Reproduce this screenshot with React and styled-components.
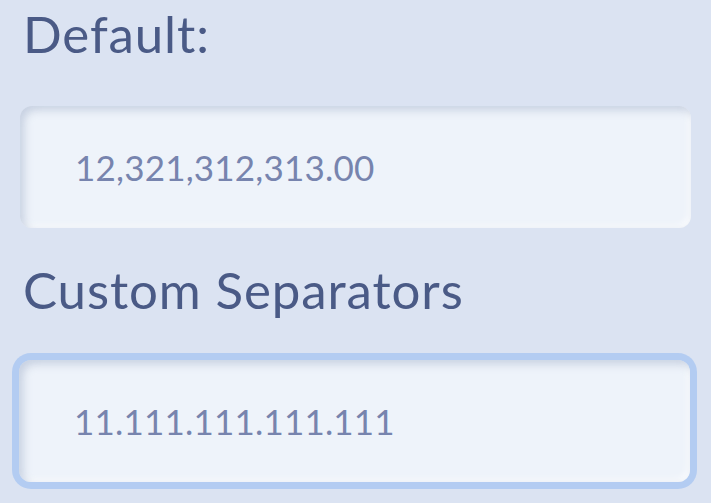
import React from 'react';
import styled, { createGlobalStyle } from 'styled-components';

const GlobalStyle = createGlobalStyle`
  html, body {
    margin: 0;
    padding: 0;
    background: #dbe3f2;
  }
  body {
    font-family: 'Lato', 'Noto Sans', sans-serif;
  }
`;

const Page = styled.div`
  display: flex;
  flex-direction: column;
  padding: 0 21px 0 20px;
  width: 711px;
  height: 503px;
  box-sizing: border-box;
  overflow: hidden;
`;

const Label = styled.h2`
  margin: ${p => p.$top}px 0 0 3px;
  font-size: 51px;
  font-weight: 400;
  line-height: 1;
  color: #4a5a86;
  letter-spacing: 0.9px;
`;

const Field = styled.input`
  display: block;
  box-sizing: border-box;
  width: 671px;
  height: 122px;
  margin: ${p => p.$top}px 0 0 ${p => (p.$focused ? -1 : 0)}px;
  padding: 0 0 0 55px;
  border: none;
  border-radius: 12px;
  background: #eef3fa;
  font-family: inherit;
  font-size: 35px;
  letter-spacing: 0.2px;
  color: #7784ae;
  outline: none;
  box-shadow: inset 4px 4px 8px rgba(150, 166, 195, 0.45),
    inset -3px -3px 6px rgba(255, 255, 255, 0.7)
    ${p => (p.$focused ? ', 0 0 0 7px #b3ccf2' : '')};
`;

const App = () => {
  return (
    <>
      <GlobalStyle />
      <Page>
        <Label $top={8}>Default:</Label>
        <Field $top={47} readOnly value="12,321,312,313.00" />
        <Label $top={36}>Custom Separators</Label>
        <Field $top={45} $focused readOnly value="11.111.111.111.111" />
      </Page>
    </>
  );
};

export default App;
